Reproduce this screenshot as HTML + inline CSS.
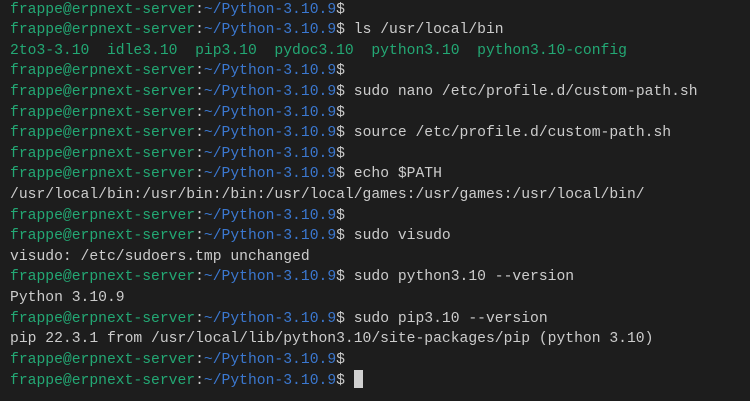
<!DOCTYPE html>
<html><head><meta charset="utf-8"><style>
html,body{margin:0;padding:0;}
body{width:750px;height:401px;background:#1d1d1d;overflow:hidden;position:relative;}
pre{position:absolute;left:10px;top:-0.3px;margin:0;font-family:"Liberation Mono",monospace;font-size:14.7px;line-height:20.6px;color:#cccccc;}
.g{color:#23a874;}
.b{color:#3b78d0;}
.cur{display:inline-block;width:9px;height:18px;background:#d0d0d0;vertical-align:-4px;}
</style></head><body><pre><span class="g">frappe@erpnext-server</span>:<span class="b">~/Python-3.10.9</span>$
<span class="g">frappe@erpnext-server</span>:<span class="b">~/Python-3.10.9</span>$ ls /usr/local/bin
<span class="g">2to3-3.10  idle3.10  pip3.10  pydoc3.10  python3.10  python3.10-config</span>
<span class="g">frappe@erpnext-server</span>:<span class="b">~/Python-3.10.9</span>$
<span class="g">frappe@erpnext-server</span>:<span class="b">~/Python-3.10.9</span>$ sudo nano /etc/profile.d/custom-path.sh
<span class="g">frappe@erpnext-server</span>:<span class="b">~/Python-3.10.9</span>$
<span class="g">frappe@erpnext-server</span>:<span class="b">~/Python-3.10.9</span>$ source /etc/profile.d/custom-path.sh
<span class="g">frappe@erpnext-server</span>:<span class="b">~/Python-3.10.9</span>$
<span class="g">frappe@erpnext-server</span>:<span class="b">~/Python-3.10.9</span>$ echo $PATH
/usr/local/bin:/usr/bin:/bin:/usr/local/games:/usr/games:/usr/local/bin/
<span class="g">frappe@erpnext-server</span>:<span class="b">~/Python-3.10.9</span>$
<span class="g">frappe@erpnext-server</span>:<span class="b">~/Python-3.10.9</span>$ sudo visudo
visudo: /etc/sudoers.tmp unchanged
<span class="g">frappe@erpnext-server</span>:<span class="b">~/Python-3.10.9</span>$ sudo python3.10 --version
Python 3.10.9
<span class="g">frappe@erpnext-server</span>:<span class="b">~/Python-3.10.9</span>$ sudo pip3.10 --version
pip 22.3.1 from /usr/local/lib/python3.10/site-packages/pip (python 3.10)
<span class="g">frappe@erpnext-server</span>:<span class="b">~/Python-3.10.9</span>$
<span class="g">frappe@erpnext-server</span>:<span class="b">~/Python-3.10.9</span>$ <span class="cur"></span></pre></body></html>
